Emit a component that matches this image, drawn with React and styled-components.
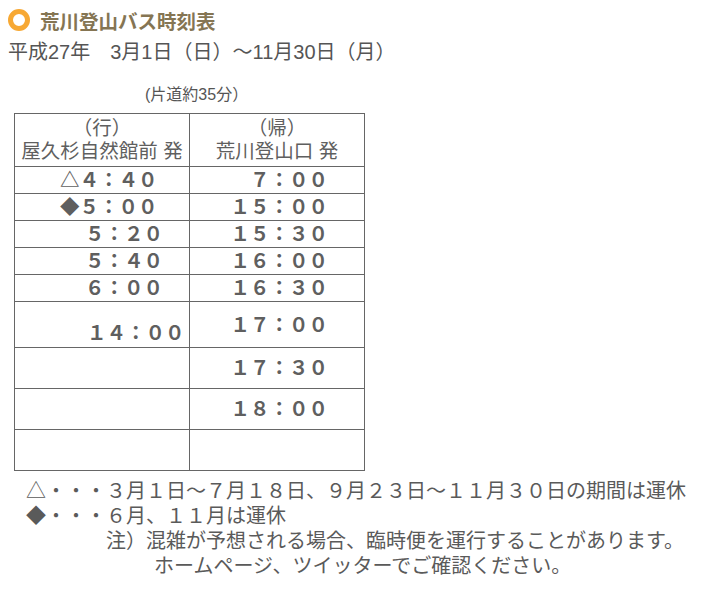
import React from 'react'
import styled, { createGlobalStyle } from 'styled-components'

const GlobalStyle = createGlobalStyle`
  body {
    margin: 0;
    background: #ffffff;
    font-family: 'Liberation Sans', 'Noto Sans CJK JP', sans-serif;
    color: #555555;
  }
`

const Page = styled.div`
  padding: 8px 8px 0 8px;
`

const TitleRow = styled.h2`
  display: flex;
  align-items: center;
  gap: 10px;
  margin: 0;
  height: 24px;
  font-size: 19.5px;
  font-weight: bold;
  color: #857553;
`

const Ring = styled.span`
  display: inline-block;
  width: 12px;
  height: 12px;
  border: 5px solid #f7a833;
  border-radius: 50%;
`

const Period = styled.p`
  margin: 8px 0 0 0;
  font-size: 20px;
  line-height: 24px;
`

const Duration = styled.p`
  margin: 21px 0 8px 137px;
  font-size: 16px;
  line-height: 20px;
`

const Timetable = styled.table`
  border-collapse: collapse;
  margin: 0 0 0 6px;
  width: 351px;
  table-layout: fixed;
  color: #5f5f5f;
`

const HeadCell = styled.th`
  border: 1px solid #666666;
  font-weight: normal;
  font-size: 19.5px;
  line-height: 23px;
  height: 52px;
  padding: 0;
  text-align: center;
  white-space: nowrap;
`

const Row = styled.tr`
  height: ${p => p.$h}px;
`

const TimeCell = styled.td`
  border: 1px solid #666666;
  padding: ${p => (p.$right ? '0 36px 0 0' : `0 0 ${p.$bottom ? 3 : 0}px ${p.$indent || 0}px`)};
  text-align: ${p => (p.$right ? 'right' : 'left')};
  vertical-align: ${p => (p.$bottom ? 'bottom' : 'middle')};
  font-size: 19.5px;
  font-weight: bold;
  line-height: 22px;
  white-space: nowrap;
`

const Notes = styled.div`
  margin: 8px 0 0 18px;
  font-size: 20px;
  line-height: 25px;
  color: #5a5a5a;
`

const NoteLine = styled.div`
  padding-left: ${p => p.$indent || 0}px;
  white-space: nowrap;
`

const rows = [
  { h: 27, left: '△４：４０', indent: 45, right: '７：００' },
  { h: 27, left: '◆５：００', indent: 45, right: '１５：００' },
  { h: 27, left: '５：２０', indent: 70, right: '１５：３０' },
  { h: 27, left: '５：４０', indent: 70, right: '１６：００' },
  { h: 27, left: '６：００', indent: 70, right: '１６：３０' },
  { h: 46, left: '１４：００', indent: 72, bottom: true, right: '１７：００' },
  { h: 41, left: '', right: '１７：３０' },
  { h: 41, left: '', right: '１８：００' },
  { h: 41, left: '', right: '' },
]

export default function App() {
  return (
    <Page>
      <GlobalStyle />
      <TitleRow>
        <Ring />
        荒川登山バス時刻表
      </TitleRow>
      <Period>平成27年　3月1日（日）〜11月30日（月）</Period>
      <Duration>(片道約35分）</Duration>
      <Timetable>
        <thead>
          <tr>
            <HeadCell>（行）<br />屋久杉自然館前 発</HeadCell>
            <HeadCell>（帰）<br />荒川登山口 発</HeadCell>
          </tr>
        </thead>
        <tbody>
          {rows.map((r, i) => (
            <Row key={i} $h={r.h}>
              <TimeCell $indent={r.indent} $bottom={r.bottom}>{r.left}</TimeCell>
              <TimeCell $right>{r.right}</TimeCell>
            </Row>
          ))}
        </tbody>
      </Timetable>
      <Notes>
        <NoteLine>△・・・３月１日〜７月１８日、９月２３日〜１１月３０日の期間は運休</NoteLine>
        <NoteLine>◆・・・６月、１１月は運休</NoteLine>
        <NoteLine $indent={80}>注）混雑が予想される場合、臨時便を運行することがあります。</NoteLine>
        <NoteLine $indent={128}>ホームページ、ツイッターでご確認ください。</NoteLine>
      </Notes>
    </Page>
  )
}
